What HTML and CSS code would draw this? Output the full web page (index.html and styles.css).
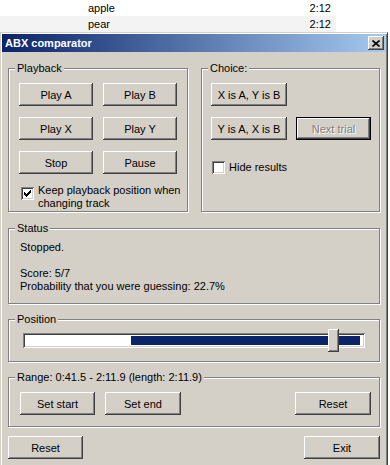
FILE: index.html
```html
<!DOCTYPE html>
<html lang="en">
    <head>
        <meta charset="UTF-8">
        <meta name="viewport" content="width=device-width,initial-scale=1.0">
        <title>ABX comparator</title>
        <link rel="stylesheet" href="styles.css">
    </head>
    <body>
        <div class="playlist">
            <div class="row"><span>apple</span><span>2:12</span></div>
            <div class="row alt"><span>pear</span><span>2:12</span></div>
        </div>

        <div class="window">
            <div class="titlebar">
                <span>ABX comparator</span>
                <button class="close">
                    <svg width="8" height="7" viewBox="0 0 8 7">
                        <path d="M0.5 0.5 L7.5 6.5 M7.5 0.5 L0.5 6.5" stroke="#000" stroke-width="1.6" fill="none"/>
                    </svg>
                </button>
            </div>

            <div class="content">
                <div class="top-row">
                    <div class="group playback">
                        <div class="caption">Playback</div>
                        <div class="btn-grid">
                            <button class="btn">Play A</button>
                            <button class="btn">Play B</button>
                            <button class="btn">Play X</button>
                            <button class="btn">Play Y</button>
                            <button class="btn">Stop</button>
                            <button class="btn">Pause</button>
                        </div>
                        <label class="check keep">
                            <span class="box">
                                <svg width="7" height="7" viewBox="0 0 7 7">
                                    <path d="M0 2h1v1h1v1h1v-1h1v-1h1v-1h1v-1h1v3h-1v1h-1v1h-1v1h-1v1h-1v-1h-1v-1h-1v-1h-1z" fill="#000"/>
                                </svg>
                            </span>
                            <span>Keep playback position when changing track</span>
                        </label>
                    </div>

                    <div class="group choice">
                        <div class="caption">Choice:</div>
                        <div class="btn-grid">
                            <button class="btn xa">X is A, Y is B</button>
                            <button class="btn ya">Y is A, X is B</button>
                            <button class="btn default" disabled>Next trial</button>
                        </div>
                        <label class="check hide">
                            <span class="box"></span>
                            <span>Hide results</span>
                        </label>
                    </div>
                </div>

                <div class="group status">
                    <div class="caption">Status</div>
                    <div class="status-text">
                        Stopped.<br><br>
                        Score: 5/7<br>
                        Probability that you were guessing: 22.7%
                    </div>
                </div>

                <div class="group position">
                    <div class="caption">Position</div>
                    <div class="track">
                        <div class="track-area">
                            <div class="selection" style="left:31.5%;width:68.5%"></div>
                        </div>
                        <div class="thumb"></div>
                    </div>
                </div>

                <div class="group range">
                    <div class="caption">Range: 0:41.5 - 2:11.9 (length: 2:11.9)</div>
                    <div class="range-buttons">
                        <button class="btn w75">Set start</button>
                        <button class="btn">Set end</button>
                        <button class="btn push">Reset</button>
                    </div>
                </div>

                <div class="footer">
                    <button class="btn w75">Reset</button>
                    <button class="btn">Exit</button>
                </div>
            </div>
        </div>
    </body>
</html>
```

FILE: styles.css
```css
* {
    box-sizing: border-box;
}

html {
    overflow: hidden;
}

body {
    margin: 0;
    background: #fff;
    font-family: "Liberation Sans", Arial, sans-serif;
    font-size: 11px;
    color: #000;
}

/* the list of the player window behind */
.playlist {
    height: 32px;
}

.row {
    width: 336px;
    height: 16px;
    display: flex;
    justify-content: space-between;
    align-items: center;
    padding: 0 5px 0 88px;
}

.row.alt {
    background: #f3f3f3;
}

/* classic window frame */
.window {
    width: 388px;
    height: 440px;
    background: #d4d0c8;
    border: 1px solid;
    border-color: #d4d0c8 #404040 #404040 #d4d0c8;
    padding: 1px;
    box-shadow: inset 1px 1px #fff, inset -1px -1px #808080;
}

.titlebar {
    height: 18px;
    display: flex;
    justify-content: space-between;
    align-items: center;
    padding: 0 2px 0 3px;
    background: linear-gradient(90deg, #0a246a, #a6caf0);
    color: #fff;
    font-weight: bold;
}

.close {
    width: 16px;
    height: 14px;
    padding: 0;
    border: 0;
    background: #d4d0c8;
    display: flex;
    justify-content: center;
    align-items: center;
    box-shadow: inset -1px -1px #404040, inset 1px 1px #fff, inset -2px -2px #808080;
}

.content {
    padding: 16px 6px 0 6px;
}

/* buttons */
.btn {
    height: 23px;
    width: 76px;
    padding: 0;
    border: 0;
    background: #d4d0c8;
    font: inherit;
    color: #000;
    box-shadow: inset -1px -1px #404040, inset 1px 1px #fff, inset -2px -2px #808080;
}

.btn.w75 {
    width: 75px;
}

.btn.default {
    width: 75px;
    border: 1px solid #000;
}

.btn:disabled {
    color: #808080;
    text-shadow: 1px 1px #fff;
}

/* group boxes */
.group {
    border: 1px solid #808080;
    box-shadow: inset 1px 1px #fff, 1px 1px #fff;
}

.caption {
    display: table;
    margin: -7px 0 0 6px;
    padding: 0 2px;
    line-height: 13px;
    background: #d4d0c8;
}

.top-row {
    display: flex;
    gap: 13px;
}

.playback {
    width: 180px;
    height: 144px;
}

.playback .btn-grid {
    display: grid;
    grid-template-columns: 74px 74px;
    column-gap: 10px;
    row-gap: 11px;
    margin: 8px 0 0 10px;
}

.playback .btn {
    width: 74px;
}

.choice {
    flex: 1;
    height: 144px;
}

.choice .btn-grid {
    display: grid;
    grid-template-columns: 76px 75px;
    column-gap: 9px;
    row-gap: 11px;
    margin: 8px 0 0 9px;
}

.choice .xa {
    grid-column: 1;
    grid-row: 1;
}

.choice .ya {
    grid-column: 1;
    grid-row: 2;
}

.choice .default {
    grid-column: 2;
    grid-row: 2;
}

/* checkboxes */
.check {
    display: flex;
    gap: 4px;
    line-height: 13px;
}

.box {
    width: 13px;
    height: 13px;
    flex: none;
    background: #fff;
    display: flex;
    justify-content: center;
    align-items: center;
    box-shadow: inset 1px 1px #808080, inset -1px -1px #fff, inset 2px 2px #404040, inset -2px -2px #d4d0c8;
}

.keep {
    margin: 10px 6px 0 12px;
}

.keep .box {
    margin-top: 3px;
}

.hide {
    margin: 21px 0 0 10px;
    align-items: center;
}

/* status */
.status {
    height: 76px;
    margin-top: 16px;
}

.status-text {
    margin: 6px 0 0 11px;
    line-height: 13px;
}

/* position slider */
.position {
    height: 43px;
    margin-top: 15px;
}

.track {
    position: relative;
    height: 15px;
    margin: 7px 14px 0 14px;
    background: #fff;
    box-shadow: inset 1px 1px #808080, inset -1px -1px #fff, inset 2px 2px #404040, inset -2px -2px #d4d0c8;
    padding: 3px 5px 3px 3px;
}

.track-area {
    position: relative;
    height: 100%;
}

.selection {
    position: absolute;
    top: 0;
    bottom: 0;
    background: #0a246a;
}

.thumb {
    position: absolute;
    left: 305px;
    top: -4px;
    width: 11px;
    height: 23px;
    background: #d4d0c8;
    box-shadow: inset -1px -1px #404040, inset 1px 1px #fff, inset -2px -2px #808080;
}

/* range */
.range {
    height: 50px;
    margin-top: 15px;
}

.range-buttons {
    display: flex;
    gap: 10px;
    margin: 8px 8px 0 11px;
}

.range-buttons .push {
    margin-left: auto;
}

.footer {
    display: flex;
    justify-content: space-between;
    margin-top: 9px;
}
```
